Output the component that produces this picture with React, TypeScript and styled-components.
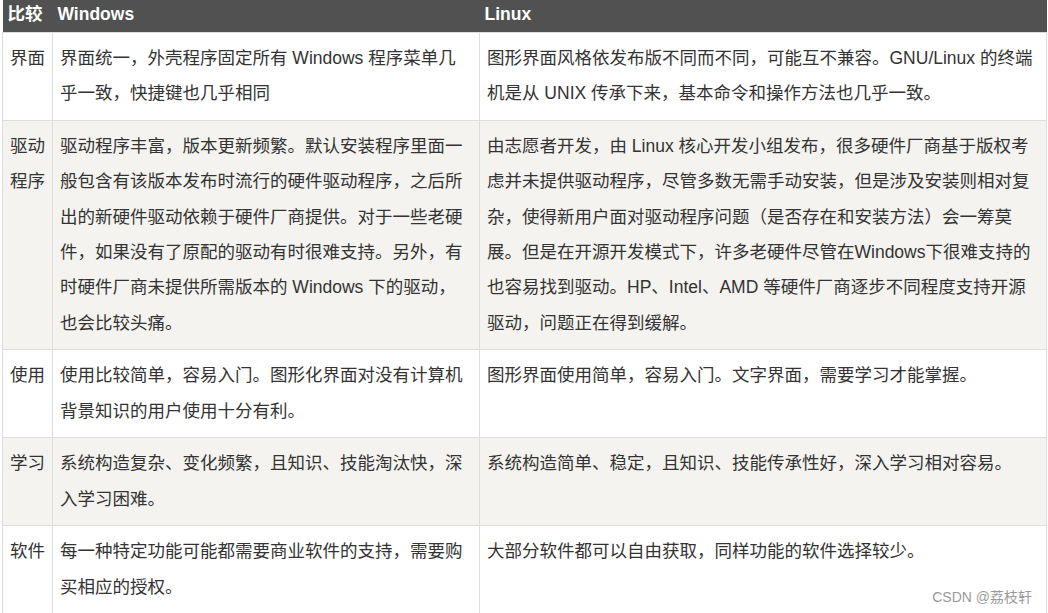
import React from "react";
import styled, { createGlobalStyle } from "styled-components";

const Global = createGlobalStyle`
  html, body { margin: 0; padding: 0; background: #fff; }
  body { overflow: hidden; }
`;

const Page = styled.div`
  position: relative;
  width: 1048px;
  height: 613px;
  overflow: hidden;
  padding-left: 2px;
  box-sizing: border-box;
  font-family: "Liberation Sans", "Noto Sans CJK SC", sans-serif;
`;

const Table = styled.table`
  width: 1044px;
  border-collapse: collapse;
  table-layout: fixed;
`;

const HeadCell = styled.th`
  background: #515151;
  color: #fff;
  font-weight: bold;
  font-size: 17.5px;
  line-height: 28px;
  height: 32px;
  box-sizing: border-box;
  padding: 0 0 4px 5px;
  text-align: left;
  vertical-align: top;
  border: none;
`;

const Row = styled.tr<{ $alt?: boolean }>`
  background: ${(p) => (p.$alt ? "#f4f3f0" : "#ffffff")};
`;

const Cell = styled.td`
  font-size: 17.5px;
  line-height: 35.3px;
  color: #333;
  padding: 8.2px 7px 8.2px 7px;
  vertical-align: top;
  border: 1px solid #dddddd;
  word-break: break-all;
`;

const Watermark = styled.div`
  position: absolute;
  right: 16px;
  bottom: 7px;
  font-size: 14px;
  color: #9a9a9a;
  font-family: "Liberation Sans", "Noto Sans CJK SC", sans-serif;
`;

const rows: [string, string, string][] = [
  [
    "界面",
    "界面统一，外壳程序固定所有 Windows 程序菜单几乎一致，快捷键也几乎相同",
    "图形界面风格依发布版不同而不同，可能互不兼容。GNU/Linux 的终端机是从 UNIX 传承下来，基本命令和操作方法也几乎一致。",
  ],
  [
    "驱动程序",
    "驱动程序丰富，版本更新频繁。默认安装程序里面一般包含有该版本发布时流行的硬件驱动程序，之后所出的新硬件驱动依赖于硬件厂商提供。对于一些老硬件，如果没有了原配的驱动有时很难支持。另外，有时硬件厂商未提供所需版本的 Windows 下的驱动，也会比较头痛。",
    "由志愿者开发，由 Linux 核心开发小组发布，很多硬件厂商基于版权考虑并未提供驱动程序，尽管多数无需手动安装，但是涉及安装则相对复杂，使得新用户面对驱动程序问题（是否存在和安装方法）会一筹莫展。但是在开源开发模式下，许多老硬件尽管在Windows下很难支持的也容易找到驱动。HP、Intel、AMD 等硬件厂商逐步不同程度支持开源驱动，问题正在得到缓解。",
  ],
  [
    "使用",
    "使用比较简单，容易入门。图形化界面对没有计算机背景知识的用户使用十分有利。",
    "图形界面使用简单，容易入门。文字界面，需要学习才能掌握。",
  ],
  [
    "学习",
    "系统构造复杂、变化频繁，且知识、技能淘汰快，深入学习困难。",
    "系统构造简单、稳定，且知识、技能传承性好，深入学习相对容易。",
  ],
  [
    "软件",
    "每一种特定功能可能都需要商业软件的支持，需要购买相应的授权。",
    "大部分软件都可以自由获取，同样功能的软件选择较少。",
  ],
];

export default function App() {
  return (
    <Page>
      <Global />
      <Table>
        <colgroup>
          <col style={{ width: 50 }} />
          <col style={{ width: 427 }} />
          <col style={{ width: 567 }} />
        </colgroup>
        <thead>
          <tr>
            <HeadCell>比较</HeadCell>
            <HeadCell>Windows</HeadCell>
            <HeadCell>Linux</HeadCell>
          </tr>
        </thead>
        <tbody>
          {rows.map((r, i) => (
            <Row key={i} $alt={i % 2 === 1}>
              <Cell>{r[0]}</Cell>
              <Cell>{r[1]}</Cell>
              <Cell>{r[2]}</Cell>
            </Row>
          ))}
        </tbody>
      </Table>
      <Watermark>CSDN @荔枝轩</Watermark>
    </Page>
  );
}
